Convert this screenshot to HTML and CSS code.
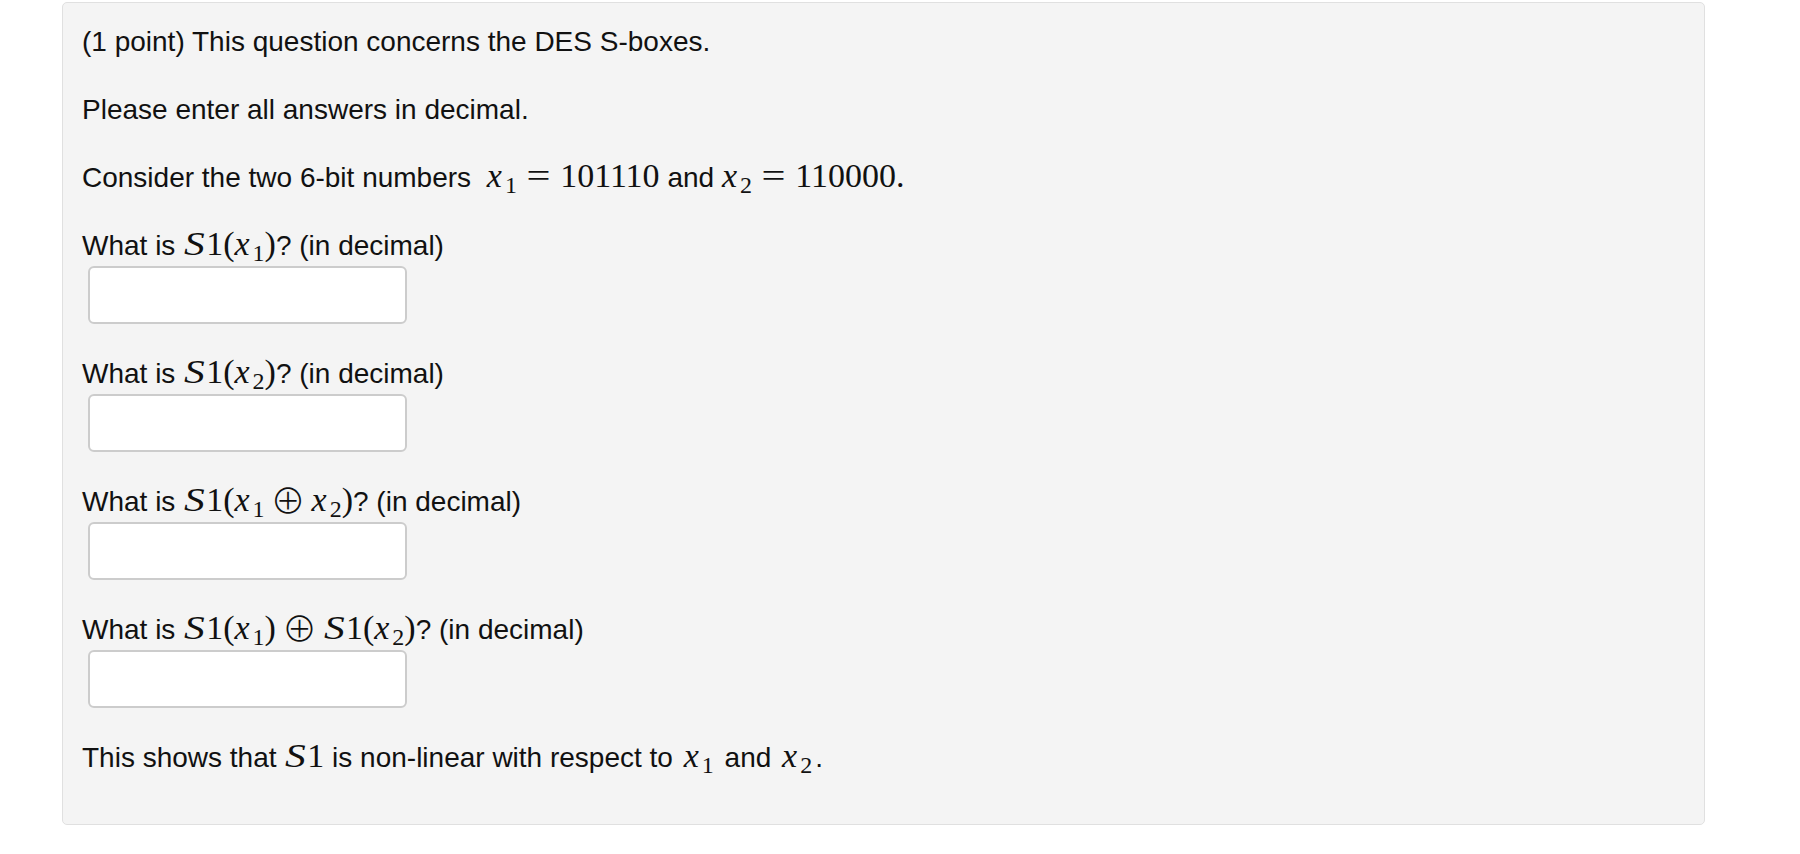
FILE: index.html
```html
<!DOCTYPE html>
<html>
<head>
<meta charset="utf-8">
<link rel="stylesheet" href="styles.css">
</head>
<body>
<div class="problem">
  <p class="para">(1 point) This question concerns the DES S-boxes.</p>
  <p class="para">Please enter all answers in decimal.</p>
  <p class="para">Consider the two 6-bit numbers <span class="math shift"><i class="x">x</i><sub>1</sub><span class="rel">=</span>101110</span> and <span class="math"><i class="x">x</i><sub>2</sub><span class="rel">=</span>110000.</span></p>
  <div class="question">
    <div class="label">What is <span class="math"><i class="s">S</i>1(<i class="x">x</i><sub>1</sub>)</span>? (in decimal)</div>
    <input class="answer" type="text">
  </div>
  <div class="question">
    <div class="label">What is <span class="math"><i class="s">S</i>1(<i class="x">x</i><sub>2</sub>)</span>? (in decimal)</div>
    <input class="answer" type="text">
  </div>
  <div class="question">
    <div class="label">What is <span class="math"><i class="s">S</i>1(<i class="x">x</i><sub>1</sub><span class="bin">⊕</span><i class="x">x</i><sub>2</sub>)</span>? (in decimal)</div>
    <input class="answer" type="text">
  </div>
  <div class="question">
    <div class="label">What is <span class="math"><i class="s">S</i>1(<i class="x">x</i><sub>1</sub>)<span class="bin">⊕</span><i class="s">S</i>1(<i class="x">x</i><sub>2</sub>)</span>? (in decimal)</div>
    <input class="answer" type="text">
  </div>
  <p class="para last">This shows that <span class="math"><i class="s">S</i>1</span> is non-linear with respect to <span class="math wide"><i class="x">x</i><sub>1</sub></span> and <span class="math wide"><i class="x">x</i><sub>2</sub></span>.</p>
</div>
</body>
</html>
```
FILE: styles.css
```css
html, body {
  margin: 0;
  padding: 0;
  background: #ffffff;
}
body {
  font-family: "Liberation Sans", Arial, sans-serif;
  font-size: 28px;
  color: #111111;
}
.problem {
  box-sizing: border-box;
  width: 1643px;
  margin: 2px 0 0 62px;
  padding: 22px 19px 49px 19px;
  background: #f4f4f4;
  border: 1px solid #e0e0e0;
  border-radius: 5px;
}
.para {
  margin: 0 0 34px 0;
  line-height: 34px;
  height: 34px;
  white-space: nowrap;
}
.para.last {
  margin-bottom: 0;
}
.question {
  margin-bottom: 33px;
}
.label {
  line-height: 34px;
  height: 34px;
  white-space: nowrap;
}
.answer {
  display: block;
  box-sizing: border-box;
  width: 319px;
  height: 58px;
  margin: 3px 0 0 6px;
  padding: 0 8px;
  background: #ffffff;
  border: 2px solid #cccccc;
  border-radius: 6px;
  font-size: 20px;
  outline: none;
}
.math {
  font-family: "Liberation Serif", "Times New Roman", serif;
  font-size: 34px;
  line-height: 0;
}
.math.shift {
  margin-left: 8px;
}
.math.wide {
  margin: 0 3px;
}
.math i {
  font-style: italic;
}
.math i.x {
  margin-right: 3px;
}
.math i.s {
  display: inline-block;
  margin-left: 1px;
  margin-right: 5px;
  transform: scaleX(1.22);
  transform-origin: left center;
}
.math sub {
  font-size: 24px;
  line-height: 0;
  vertical-align: -6px;
}
.rel {
  display: inline-block;
  margin: 0 12px;
  transform: scaleX(1.25);
}
.bin {
  font-family: "DejaVu Sans", "Noto Sans CJK JP", sans-serif;
  font-weight: 200;
  font-size: 35px;
  margin: 0 6px;
  vertical-align: -3px;
}
```
